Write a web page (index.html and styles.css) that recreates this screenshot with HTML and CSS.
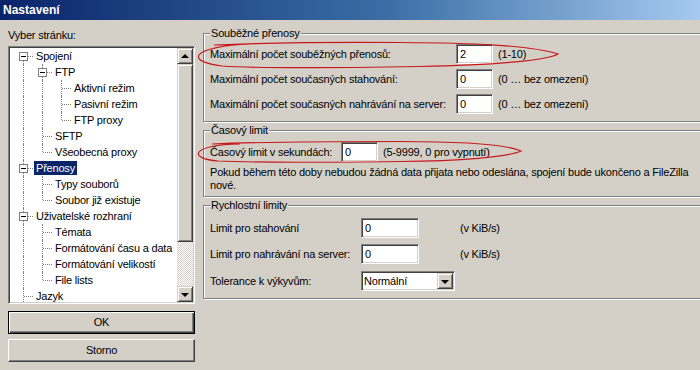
FILE: index.html
```html
<!DOCTYPE html>
<html lang="cs">
<head>
<meta charset="utf-8">
<title>Nastavení</title>
<link rel="stylesheet" href="styles.css">
</head>
<body>
<div class="titlebar">Nastavení</div>
<div class="main">
  <div class="left">
    <div class="pick-label">Vyber stránku:</div>
    <div class="tree">
      <ul class="tree-list">
        <li class="node"><span class="cell f"><span class="box"></span></span><span class="label">Spojení</span></li>
        <li class="node"><span class="cell v"></span><span class="cell t"><span class="box"></span></span><span class="label">FTP</span></li>
        <li class="node"><span class="cell v"></span><span class="cell v"></span><span class="cell t"></span><span class="label">Aktivní režim</span></li>
        <li class="node"><span class="cell v"></span><span class="cell v"></span><span class="cell t"></span><span class="label">Pasivní režim</span></li>
        <li class="node"><span class="cell v"></span><span class="cell v"></span><span class="cell l"></span><span class="label">FTP proxy</span></li>
        <li class="node"><span class="cell v"></span><span class="cell t"></span><span class="label">SFTP</span></li>
        <li class="node"><span class="cell v"></span><span class="cell l"></span><span class="label">Všeobecná proxy</span></li>
        <li class="node"><span class="cell t"><span class="box"></span></span><span class="label selected">Přenosy</span></li>
        <li class="node"><span class="cell v"></span><span class="cell t"></span><span class="label">Typy souborů</span></li>
        <li class="node"><span class="cell v"></span><span class="cell l"></span><span class="label">Soubor již existuje</span></li>
        <li class="node"><span class="cell t"><span class="box"></span></span><span class="label">Uživatelské rozhraní</span></li>
        <li class="node"><span class="cell v"></span><span class="cell t"></span><span class="label">Témata</span></li>
        <li class="node"><span class="cell v"></span><span class="cell t"></span><span class="label">Formátování času a data</span></li>
        <li class="node"><span class="cell v"></span><span class="cell t"></span><span class="label">Formátování velikostí</span></li>
        <li class="node"><span class="cell v"></span><span class="cell l"></span><span class="label">File lists</span></li>
        <li class="node"><span class="cell t"></span><span class="label">Jazyk</span></li>
      </ul>
      <div class="vscroll">
        <div class="sb-btn"><span class="arrow-up"></span></div>
        <div class="sb-thumb"></div>
        <div class="sb-track"></div>
        <div class="sb-btn"><span class="arrow-down"></span></div>
      </div>
    </div>
    <button class="btn default">OK</button>
    <button class="btn second">Storno</button>
  </div>

  <div class="right">
    <fieldset class="group g1">
      <legend>Souběžné přenosy</legend>
      <div class="row"><span class="lbl w1">Maximální počet souběžných přenosů:</span><input class="field num" type="text" value="2"><span class="hint">(1-10)</span></div>
      <div class="row"><span class="lbl w1">Maximální počet současných stahování:</span><input class="field num" type="text" value="0"><span class="hint">(0 … bez omezení)</span></div>
      <div class="row"><span class="lbl w1">Maximální počet současných nahrávání na server:</span><input class="field num" type="text" value="0"><span class="hint">(0 … bez omezení)</span></div>
    </fieldset>

    <fieldset class="group g2">
      <legend>Časový limit</legend>
      <div class="row"><span class="lbl w2">Časový limit v sekundách:</span><input class="field num" type="text" value="0"><span class="hint">(5-9999, 0 pro vypnutí)</span></div>
      <p class="note">Pokud během této doby nebudou žádná data přijata nebo odeslána, spojení bude ukončeno a FileZilla<br>nové.</p>
    </fieldset>

    <fieldset class="group g3">
      <legend>Rychlostní limity</legend>
      <div class="row"><span class="lbl w3">Limit pro stahování</span><input class="field wide" type="text" value="0"><span class="hint far">(v KiB/s)</span></div>
      <div class="row r2"><span class="lbl w3">Limit pro nahrávání na server:</span><input class="field wide" type="text" value="0"><span class="hint far">(v KiB/s)</span></div>
      <div class="row r3"><span class="lbl w3">Tolerance k výkyvům:</span><span class="select"><span class="sel-value">Normální</span><span class="sel-btn"><span class="arrow-down"></span></span></span></div>
    </fieldset>
  </div>
</div>

<svg class="annot" width="700" height="370" viewBox="0 0 700 370">
  <path d="M 214 45 C 260 43, 330 42, 400 42.5 C 470 43, 530 45, 558 54 C 548 60, 500 65, 420 66.5 C 330 68, 250 68, 222 66 C 206 64, 196 60, 199 55 C 203 49, 225 45, 250 44" fill="none" stroke="#c8181c" stroke-width="1.2"/>
  <path d="M 212 144 C 260 142, 330 141.5, 400 141.5 C 460 141.5, 505 144, 521 151 C 508 157, 460 161, 400 161.5 C 320 162.5, 250 162.5, 218 161 C 204 160, 196 156, 199 152 C 203 147, 220 144.5, 240 144" fill="none" stroke="#c8181c" stroke-width="1.2"/>
</svg>
</body>
</html>
```

FILE: styles.css
```css
html, body {
  margin: 0;
}

body {
  width: 700px;
  height: 370px;
  overflow: hidden;
  position: relative;
  background: #d4d0c8;
  color: #000;
  font-family: "Liberation Sans", Arial, sans-serif;
  font-size: 11px;
  line-height: 13px;
  letter-spacing: -0.2px;
}

.titlebar {
  height: 20px;
  line-height: 20px;
  padding-left: 3px;
  background: linear-gradient(to right, #0a246a 0%, #3a6ea5 55%, #a6caf0 100%);
  color: #fff;
  font-weight: bold;
  font-size: 12px;
  letter-spacing: 0;
}

.main {
  display: flex;
  padding-left: 8px;
}

/* ---------- left column ---------- */
.left {
  width: 187px;
  flex: none;
  display: flex;
  flex-direction: column;
}

.pick-label {
  margin-top: 9px;
  height: 13px;
}

.tree {
  margin-top: 4px;
  height: 258px;
  box-sizing: border-box;
  display: flex;
  border: 1px solid;
  border-color: #808080 #fff #fff #808080;
  box-shadow: inset 1px 1px #404040, inset -1px -1px #d4d0c8;
  padding: 1px;
  background: #fff;
}

.tree-list {
  flex: 1;
  list-style: none;
  margin: 0;
  padding: 0 0 0 4px;
  overflow: hidden;
  background: #fff;
}

.node {
  display: flex;
  align-items: center;
  height: 16px;
  white-space: nowrap;
}

.cell {
  flex: none;
  position: relative;
  width: 19px;
  height: 16px;
}

.cell::before,
.cell::after {
  content: "";
  position: absolute;
}

.cell.v::before,
.cell.t::before {
  left: 9px;
  top: 0;
  bottom: 0;
  border-left: 1px dotted #808080;
}

.cell.l::before {
  left: 9px;
  top: 0;
  height: 8px;
  border-left: 1px dotted #808080;
}

.cell.f::before {
  left: 9px;
  top: 8px;
  bottom: 0;
  border-left: 1px dotted #808080;
}

.cell.t::after,
.cell.l::after,
.cell.f::after {
  left: 10px;
  top: 8px;
  width: 9px;
  border-top: 1px dotted #808080;
}

.box {
  position: absolute;
  left: 5px;
  top: 4px;
  width: 9px;
  height: 9px;
  box-sizing: border-box;
  border: 1px solid #808080;
  background: #fff;
  z-index: 1;
}

.box::before {
  content: "";
  position: absolute;
  left: 1px;
  top: 3px;
  width: 5px;
  height: 1px;
  background: #000;
}

.label {
  padding: 0 2px;
  margin-left: 1px;
  line-height: 14px;
}

.label.selected {
  background: #0a246a;
  color: #fff;
}

.vscroll {
  width: 16px;
  flex: none;
  display: flex;
  flex-direction: column;
}

.sb-btn,
.sb-thumb,
.sel-btn {
  box-sizing: border-box;
  background: #d4d0c8;
  border: 1px solid;
  border-color: #d4d0c8 #404040 #404040 #d4d0c8;
  box-shadow: inset 1px 1px #fff, inset -1px -1px #808080;
}

.sb-btn {
  height: 16px;
  display: flex;
  align-items: center;
  justify-content: center;
}

.sb-thumb {
  height: 178px;
}

.sb-track {
  flex: 1;
  background-color: #fff;
  background-image: conic-gradient(#d4d0c8 25%, #fff 0 50%, #d4d0c8 0 75%, #fff 0);
  background-size: 2px 2px;
}

.arrow-up {
  width: 0;
  height: 0;
  border-left: 4px solid transparent;
  border-right: 4px solid transparent;
  border-bottom: 4px solid #000;
  margin-top: -1px;
}

.arrow-down {
  width: 0;
  height: 0;
  border-left: 4px solid transparent;
  border-right: 4px solid transparent;
  border-top: 4px solid #000;
  margin-top: 1px;
}

.btn {
  margin: 7px 0 0 0;
  height: 23px;
  width: 187px;
  box-sizing: border-box;
  padding: 0;
  font: inherit;
  letter-spacing: inherit;
  color: #000;
  background: #d4d0c8;
  border: 1px solid;
  border-color: #fff #404040 #404040 #fff;
  box-shadow: inset -1px -1px #808080;
}

.btn.default {
  border: 1px solid #000;
  box-shadow: inset 1px 1px #fff, inset -1px -1px #404040, inset -2px -2px #808080;
}

.btn.second {
  margin-top: 5px;
}

/* ---------- right column ---------- */
.right {
  margin-left: 8px;
  width: 500px;
  flex: none;
  display: flex;
  flex-direction: column;
}

.group {
  margin: 2px 0 0 0;
  padding: 0 6px;
  min-width: 0;
  border: 1px solid #808080;
  box-shadow: inset 1px 1px #fff, 1px 1px #fff;
}

.group legend {
  padding: 0 1px;
  margin-left: 0;
  line-height: 13px;
  background: #d4d0c8;
}

.g1 {
  margin-top: 7px;
  padding-top: 4px;
  padding-bottom: 7px;
  display: flex;
  flex-direction: column;
  gap: 5px;
}

.g2 {
  padding-top: 5px;
  padding-bottom: 4px;
}

.g3 {
  padding-top: 6px;
  padding-bottom: 7px;
}

.row {
  display: flex;
  align-items: center;
  height: 20px;
  white-space: nowrap;
}

.r2 {
  margin-top: 6px;
}

.r3 {
  margin-top: 7px;
}

.lbl {
  flex: none;
}

.w1 { width: 246px; }
.w2 { width: 131px; }
.w3 { width: 151px; }

.field {
  flex: none;
  box-sizing: border-box;
  height: 20px;
  margin: 0;
  padding: 0 0 0 3px;
  font: inherit;
  letter-spacing: inherit;
  color: #000;
  background: #fff;
  border: 1px solid;
  border-color: #808080 #fff #fff #808080;
  box-shadow: inset 1px 1px #404040, inset -1px -1px #d4d0c8;
  outline: none;
}

.field.num { width: 37px; }
.field.wide { width: 58px; }

.hint {
  margin-left: 5px;
}

.hint.far {
  margin-left: 41px;
}

.note {
  margin: 4px 0 0 0;
  line-height: 13px;
  white-space: nowrap;
}

.select {
  flex: none;
  display: flex;
  align-items: center;
  box-sizing: border-box;
  width: 94px;
  height: 20px;
  padding: 1px;
  background: #fff;
  border: 1px solid;
  border-color: #808080 #fff #fff #808080;
  box-shadow: inset 1px 1px #404040, inset -1px -1px #d4d0c8;
}

.sel-value {
  flex: 1;
  padding-left: 1px;
}

.sel-btn {
  width: 16px;
  height: 16px;
  display: flex;
  align-items: center;
  justify-content: center;
}

/* ---------- annotations ---------- */
.annot {
  position: absolute;
  left: 0;
  top: 0;
  pointer-events: none;
}
```
